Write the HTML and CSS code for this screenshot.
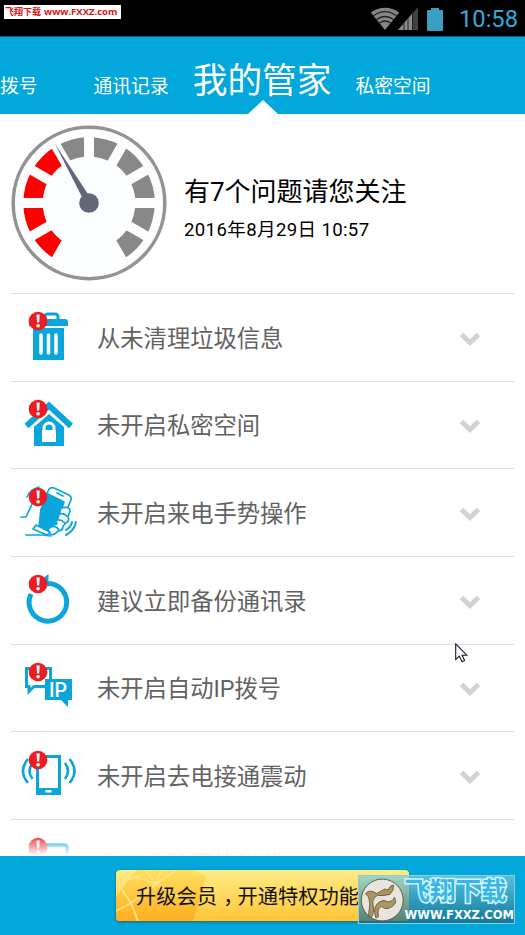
FILE: index.html
```html
<!DOCTYPE html>
<html lang="zh-CN">
<head>
<meta charset="utf-8">
<title>我的管家</title>
<link rel="stylesheet" href="styles.css">
</head>
<body>
<svg width="0" height="0" class="defs">
  <symbol id="alert" viewBox="0 0 20 20"><circle cx="10" cy="10" r="9.3" fill="#ec1c24"/><path d="M8.500 3.600h3.200l-.5 8H9z" fill="#fff"/><circle cx="10.1" cy="14.8" r="1.8" fill="#fff"/></symbol>
  <symbol id="chevron" viewBox="0 0 22 16"><path d="M2.500 3.500 11 11.500 19.500 3.500" fill="none" stroke="#d2d2d2" stroke-width="5"/></symbol>
</svg>
<div class="screen">
  <header class="status">
    <div class="tag"><span class="tag-cn">飞翔下载</span><span class="tag-url">www.FXXZ.com</span></div>
    <div class="system">
      <svg class="wifi" width="30" height="24" viewBox="0 0 30 24"><path d="M15 23 .8 5.500C9-1 21-1 29.200 5.500Z" fill="#858585"/><g fill="none" stroke="#222" stroke-width="1.300"><path d="M3.500 8.800Q15 .6 26.500 8.800"/><path d="M6.500 12.500Q15 6.500 23.500 12.500"/><path d="M9.500 16Q15 12 20.500 16"/></g></svg>
      <svg class="signal" width="20" height="23" viewBox="0 0 20 23"><path d="M0 23 20 0V23Z" fill="#414141"/><path d="M0 23 14.500 6.300V23Z" fill="#8b8b8b"/><path d="M6 15v8M10 11v12M14.500 5v18" stroke="#222"/></svg>
      <svg class="battery" width="16" height="24" viewBox="0 0 16 24"><path d="M4 1h8v2h3q1 0 1 1v19q0 1-1 1H1q-1 0-1-1V4q0-1 1-1h3z" fill="#3d9ec4"/></svg>
      <span class="clock">10:58</span>
    </div>
  </header>
  <nav class="tabs">
    <span class="tab dial">拨号</span><span class="tab calls">通讯记录</span><span class="tab active">我的管家</span><span class="tab private">私密空间</span>
  </nav>
  <section class="summary">
    <svg class="gauge" width="156" height="156" viewBox="-78 -78 156 156">
      <circle r="75.800" fill="#fbfdff" stroke="#939393" stroke-width="3.500"/>
      <path d="M-28 48.500A56 56 0 0 1-28-48.500" fill="none" stroke="#f00" stroke-width="19.400"/>
      <path d="M-28-48.500A56 56 0 0 1 28 48.500" fill="none" stroke="#888" stroke-width="19.400"/>
      <path d="M0-69V69M-69 0H69M-34.500-59.800 34.500 59.800M34.500-59.800-34.500 59.800M-59.800-34.500 59.800 34.500M59.800-34.500-59.800 34.500" stroke="#fbfdff" stroke-width="10"/>
      <path d="M-34-59-7-6-1-9Z" fill="#626778"/><circle r="9.800" fill="#626778"/>
    </svg>
    <div class="report"><h1>有7个问题请您关注</h1><p>2016年8月29日 10:57</p></div>
  </section>
  <main class="list">
    <div class="row">
      <svg class="icon" width="60" height="60" viewBox="0 0 60 60"><g fill="#0aa6db"><path d="M14 15q0-4 4-4h32q3 0 3 3v4H14zM18 20h31v32H18z"/><path d="M30 12V8q0-2 3-2h7q3 0 3 3v3" fill="none" stroke="#0aa6db" stroke-width="3"/></g><path d="M26 27v18M33.500 27v18M41 27v18" stroke="#fff" stroke-width="3.500" stroke-linecap="round"/><use href="#alert" x="13" y="3" width="20" height="20"/></svg>
      <span>从未清理垃圾信息</span><svg class="chevron"><use href="#chevron"/></svg></div>
    <div class="row">
      <svg class="icon" width="60" height="60" viewBox="0 0 60 60"><path d="M11.500 30 34 9.500 56 30" fill="none" stroke="#0aa6db" stroke-width="6"/><path d="M34 18 49 31V50H19V31Z" fill="#0aa6db"/><path d="M27 34h14v12H27z" fill="#fff"/><path d="M29 35v-3a5 5 0 0 1 10 0v3" fill="none" stroke="#fff" stroke-width="3"/><use href="#alert" x="13" y="3" width="20" height="20"/></svg>
      <span>未开启私密空间</span><svg class="chevron"><use href="#chevron"/></svg></div>
    <div class="row">
      <svg class="icon" width="60" height="60" viewBox="0 0 60 60"><g fill="none" stroke="#0aa6db" stroke-width="1.700" stroke-linecap="round" stroke-linejoin="round"><path d="M6 33h5L18 18M11 51h17L36 52M12 13q2-7 12-10"/><path d="M30 14 34 5q2-2 5-1l15 7q3 2 2 5l-4 9-6-2" fill="#fff"/><path d="M42 9l6 3"/><path d="M33 10 49 18 42 40 34 47 24 43 26 25Z" fill="#0aa6db"/><path d="M47 24q8-2 8 3l-2 6q2 4-2 6l-3 3q0 5-5 5-4 5-8 3l-2-3q1-5 9-7" fill="#fff"/><path d="M43 31q4-3 9 1M40 37q5-3 10 2M36 43q5-2 8 3M21 41l14 7-3 3-14-6Z" fill="#fff"/><path d="M51 46q5-3 6-8M51 51q8-4 10-13" stroke-width="2"/></g><use href="#alert" x="13" y="3" width="20" height="20"/></svg>
      <span>未开启来电手势操作</span><svg class="chevron"><use href="#chevron"/></svg></div>
    <div class="row">
      <svg class="icon" width="60" height="60" viewBox="0 0 60 60"><path d="M32 12.500A18.800 18.800 0 1 1 16 23" fill="none" stroke="#0aa6db" stroke-width="5"/><path d="M25 9.500 33.500 3V16Z" fill="#0aa6db"/><use href="#alert" x="13" y="3" width="20" height="20"/></svg>
      <span>建议立即备份通讯录</span><svg class="chevron"><use href="#chevron"/></svg></div>
    <div class="row">
      <svg class="icon" width="60" height="60" viewBox="0 0 60 60"><path d="M11.500 9.500h24v18H19l-5 5v-5h-2.500z" fill="#fff" stroke="#0aa6db" stroke-width="3"/><path d="M30 20h27v21h-4v7l-7-7H30z" fill="#0aa6db"/><text x="34" y="38" class="ip">IP</text><use href="#alert" x="13" y="3" width="20" height="20"/></svg>
      <span>未开启自动IP拨号</span><svg class="chevron"><use href="#chevron"/></svg></div>
    <div class="row">
      <svg class="icon" width="60" height="60" viewBox="0 0 60 60"><path d="M22.500 9.500h22v37h-22z" fill="#fff" stroke="#0aa6db" stroke-width="3"/><path d="M21 41h25v7H21z" fill="#0aa6db"/><path d="M30.500 43h6v2.500h-6z" fill="#fff"/><path d="M13 12q-10 12 0 24M17.500 16q-6 8 0 16M54.500 12q10 12 0 24M50 16q6 8 0 16" fill="none" stroke="#0aa6db" stroke-width="2.600"/><use href="#alert" x="13" y="3" width="20" height="20"/></svg>
      <span>未开启去电接通震动</span><svg class="chevron"><use href="#chevron"/></svg></div>
    <div class="row">
      <svg class="icon" width="60" height="60" viewBox="0 0 60 60"><path d="M16 48V11h33q3 0 3 3v34z" fill="#fff" stroke="#0aa6db" stroke-width="3.500"/><use href="#alert" x="13" y="3" width="20" height="20"/></svg>
      <span>未开启防骚扰拦截</span></div>
    <div class="fade"></div>
  </main>
  <footer class="bottom">
    <button class="upgrade"><svg class="facets" width="90" height="51" viewBox="0 0 90 51"><defs><linearGradient id="gold" x2="0" y2="1"><stop stop-color="#ffe05e"/><stop offset="1" stop-color="#ffae20"/></linearGradient></defs><path d="M0 27 20 0H78L90 7 77 51H0Z" fill="url(#gold)"/><path d="M0 41 15 33 40 14 60 0M15 33 22 51M15 33 2 14 20 7 40 14 45 0M40 14 75 34M40 14 29 0" fill="none" stroke="#ffe384" stroke-width="1.800"/></svg><span>升级会员<i class="comma">，</i>开通特权功能</span></button>
  </footer>
  <div class="watermark">
    <svg width="50" height="48" viewBox="0 0 50 48"><circle cx="25" cy="24" r="22.500" fill="#e8e5df" stroke="#5d5540"/><g fill="#ae955b" stroke="#51493a" stroke-width=".8"><path d="M7 17Q12 12 19 17L28 12Q31 15 34 9L37 8Q38 14 33 18Q25 20 20 19Q14 22 15 29Q17 38 13 43Q9 42 11 34Q13 22 7 17Z"/><path d="M18 43Q14 31 22 26Q27 23 31 26Q36 26 38 21Q42 28 34 32Q29 35 24 31Q19 33 21 42Z"/></g></svg>
    <div class="brand"><b>飞翔下载</b><span>WWW.FXXZ.COM</span></div>
  </div>
  <svg class="cursor" width="13" height="20" viewBox="0 0 13 20"><path d="M.7.8V16.500l3.600-3.300 2.800 5.500 2.500-1.200-2.500-5.300h4.700Z" fill="#fff" stroke="#171729" stroke-width="1.100"/></svg>
</div>
</body>
</html>
```

FILE: styles.css
```css
* { box-sizing: border-box; }
body { margin: 0; background: #fff; font-family: Roboto, "Noto Sans CJK SC", sans-serif; }
.defs { position: absolute; }
.screen { position: relative; width: 525px; height: 935px; overflow: hidden; display: flex; flex-direction: column; }
.status { height: 37px; flex: none; background: #000; display: flex; justify-content: space-between; align-items: flex-start; padding: 5px 9px 0 4px; border-bottom: 1px solid #075f79; }
.tag { width: 117px; height: 14px; background: #fff; color: #e01010; display: flex; align-items: center; gap: 3px; padding-left: 1px; white-space: nowrap; line-height: 14px; }
.tag-cn { font-size: 9px; font-weight: 700; }
.tag-url { font: 700 9.5px/14px "Open Sans", sans-serif; }
.system { display: flex; align-items: center; height: 27px; }
.wifi { margin-right: -2px; }
.battery { margin: 0 16px 0 9px; }
.clock { color: #35a9d8; font-size: 23.7px; line-height: 28px; width: 57px; }
.tabs { height: 77px; flex: none; background: #02a8dc; color: #fff; display: flex; align-items: baseline; padding-top: 18px; white-space: nowrap; clip-path: polygon(0 0,100% 0,100% 100%,278px 100%,263px 63px,248px 100%,0 100%); }
.tab { font-size: 18.8px; line-height: 52px; }
.calls { margin-left: 56px; }
.active { font-size: 34.7px; margin-left: 24px; }
.private { margin-left: 24px; }
.summary { height: 179px; flex: none; display: flex; padding: 11px 0 0 11px; }
.report { margin: 48px 0 0 17px; color: #000; }
h1 { margin: 0; font-size: 26px; font-weight: 400; line-height: 38px; white-space: nowrap; }
p { margin: 6px 0 0; font-size: 18.6px; letter-spacing: .35px; line-height: 26px; }
.list { height: 563px; flex: none; position: relative; overflow: hidden; padding: 0 11px; }
.row { height: 87.65px; border-top: 1px solid #dedede; display: flex; align-items: center; color: #626262; font-size: 23.3px; white-space: nowrap; }
.icon { margin: 2px 20px 0 4px; flex: none; overflow: visible; }
.row span { flex: 1; margin: -1px 0 0 2px; }
.chevron { width: 22px; height: 16px; margin: 3px 33px 0 0; }
.ip { font: 500 19.5px Roboto, sans-serif; fill: #fff; }
.fade { position: absolute; left: 0; right: 0; bottom: 0; height: 23px; background: linear-gradient(#fff0, #fff); }
.bottom { height: 79px; flex: none; background: #02a8dc; padding: 14px 0 0 116px; }
.upgrade { position: relative; display: block; width: 293px; height: 51px; border: 0; border-radius: 4px; padding: 0 0 2px 20px; text-align: left; background: linear-gradient(#ffec85, #ffc638); box-shadow: 0 1px 3px #315b53; font: 20.3px Roboto, "Noto Sans CJK SC", sans-serif; color: #111; white-space: nowrap; overflow: hidden; }
.facets { position: absolute; left: 0; top: 0; }
.upgrade span { position: relative; }
.comma { display: inline-block; font-style: normal; transform: translateX(6px); }
.watermark { position: absolute; left: 358px; top: 875px; width: 157px; height: 49px; border: 1px solid #8bcddd; background: linear-gradient(#78cde0b0, #176a86c0); display: flex; }
.brand { display: flex; flex-direction: column; white-space: nowrap; margin-left: -1px; }
.brand b { font-size: 25.5px; line-height: 30px; color: #35b5e8; -webkit-text-stroke: 3px #d5f5ff; paint-order: stroke fill; height: 33px; }
.brand span { font: 700 11.5px/12px "DejaVu Sans", sans-serif; color: #fff; }
.cursor { position: absolute; left: 455px; top: 643px; }
```
